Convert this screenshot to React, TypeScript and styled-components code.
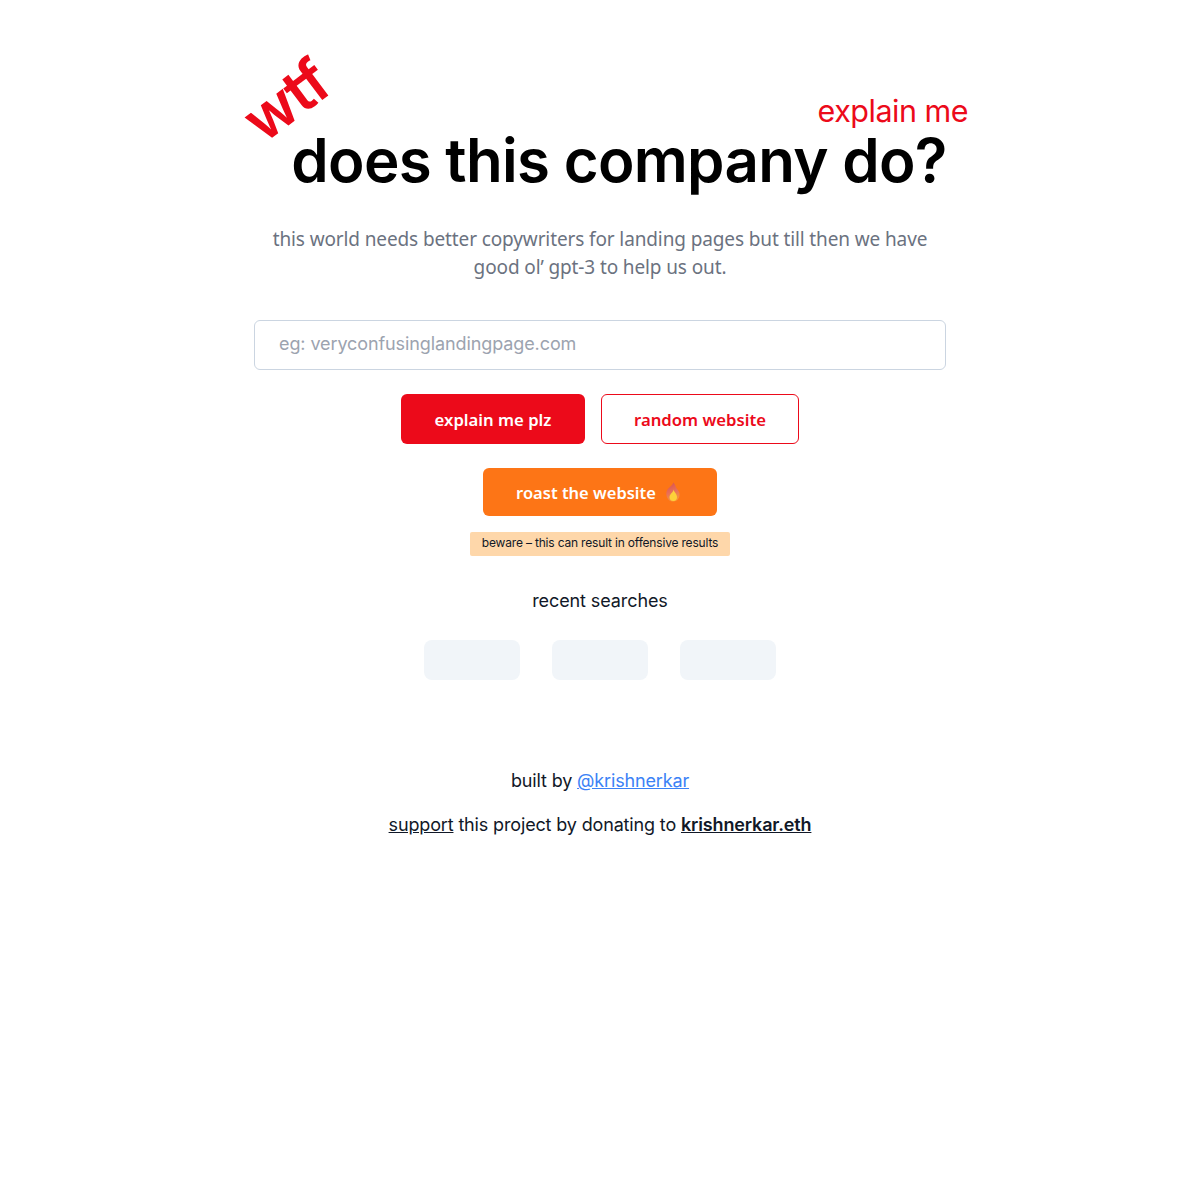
import React from 'react';
import styled, { createGlobalStyle } from 'styled-components';

const GlobalStyle = createGlobalStyle`
  html, body {
    margin: 0;
    padding: 0;
    background: #fff;
    font-family: Inter, "Liberation Sans", sans-serif;
  }
`;

const Page = styled.main`
  width: 692px;
  margin: 0 auto;
  padding-top: 126px;
  display: flex;
  flex-direction: column;
  align-items: center;
`;

const Headline = styled.div`
  position: relative;
  width: 692px;
  height: 70px;
  display: flex;
  justify-content: center;
`;

const Title = styled.h1`
  margin: 3px 0 0 38px;
  font-size: 60px;
  line-height: 62px;
  font-weight: 600;
  letter-spacing: -0.7px;
  color: #000;
  white-space: nowrap;
`;

const Wtf = styled.span`
  position: absolute;
  left: -13px;
  top: -61px;
  font-size: 60px;
  line-height: 70px;
  font-weight: 600;
  letter-spacing: -1.2px;
  color: #ec0a1a;
  transform: rotate(-37deg);
`;

const ExplainMe = styled.span`
  position: absolute;
  right: -22px;
  top: -32px;
  font-size: 30.5px;
  line-height: 34px;
  letter-spacing: -0.5px;
  color: #ec0a1a;
`;

const Subtitle = styled.p`
  width: 692px;
  margin: 29px 0 0;
  font-family: "Noto Sans", sans-serif;
  font-size: 19px;
  line-height: 28px;
  letter-spacing: -0.12px;
  text-align: center;
  color: #6b7280;
`;

const UrlInput = styled.input`
  box-sizing: border-box;
  width: 692px;
  height: 50px;
  margin-top: 39px;
  padding: 0 24px 3px;
  border: 1px solid #cbd5e1;
  border-radius: 6px;
  font-family: Inter, sans-serif;
  font-size: 18px;
  letter-spacing: -0.1px;
  outline: none;

  &::placeholder {
    color: #9ca3af;
    opacity: 1;
  }
`;

const ButtonRow = styled.div`
  display: flex;
  gap: 16px;
  margin-top: 24px;
`;

const Button = styled.button<{ $variant: 'solid' | 'outline' | 'roast' }>`
  box-sizing: border-box;
  height: ${({ $variant }) => ($variant === 'roast' ? '48px' : '50px')};
  width: ${({ $variant }) => ($variant === 'solid' ? '184px' : $variant === 'outline' ? '198px' : '234px')};
  padding: 0;
  display: flex;
  align-items: center;
  justify-content: center;
  gap: 9px;
  border-radius: 6px;
  border: ${({ $variant }) => ($variant === 'outline' ? '1px solid #ec0a1a' : 'none')};
  background: ${({ $variant }) =>
    $variant === 'solid' ? '#ec0a1a' : $variant === 'roast' ? '#fd7516' : '#fff'};
  color: ${({ $variant }) => ($variant === 'outline' ? '#ec0a1a' : '#fff')};
  font-family: "Noto Sans", sans-serif;
  font-size: ${({ $variant }) => ($variant === 'roast' ? '16.5px' : '16.7px')};
  font-weight: 600;
`;

const RoastWrap = styled.div`
  margin-top: 24px;
`;

const FlameIcon = styled.svg`
  margin-right: 3px;
`;

const Warning = styled.div`
  margin-top: 16px;
  box-sizing: border-box;
  height: 24px;
  padding: 0 12px 3px;
  display: flex;
  align-items: center;
  border-radius: 2px;
  background: #fed7aa;
  color: #111827;
  font-size: 12px;
  letter-spacing: -0.18px;
`;

const RecentTitle = styled.h2`
  margin: 32px 0 0;
  font-size: 18px;
  line-height: 26px;
  font-weight: 400;
  letter-spacing: -0.1px;
  color: #111827;
`;

const RecentRow = styled.div`
  display: flex;
  gap: 32px;
  margin-top: 26px;
`;

const Skeleton = styled.div`
  width: 96px;
  height: 40px;
  border-radius: 8px;
  background: #f1f5f9;
`;

const FooterLine = styled.p<{ $gap: number }>`
  margin: ${({ $gap }) => $gap}px 0 0;
  font-size: 18px;
  line-height: 26px;
  letter-spacing: -0.15px;
  color: #111827;
  white-space: nowrap;
`;

const Link = styled.a<{ $blue?: boolean; $bold?: boolean }>`
  color: ${({ $blue }) => ($blue ? '#3b82f6' : '#111827')};
  font-weight: ${({ $bold }) => ($bold ? 600 : 400)};
  text-decoration: underline;
`;

function Flame() {
  return (
    <FlameIcon width="16" height="20" viewBox="0 0 16 20" aria-hidden="true">
      <defs>
        <linearGradient id="flame" x1="0.3" y1="0" x2="0.6" y2="1">
          <stop offset="0" stopColor="#d9534f" />
          <stop offset="0.5" stopColor="#e9705a" />
          <stop offset="1" stopColor="#f99a34" />
        </linearGradient>
      </defs>
      <path
        d="M8 0.5C8.5 3 3.5 5 1.8 9C0.3 12.8 2.5 19.5 8 19.5C13 19.5 15 15 14.5 11.5C14 8 11 7 10.5 4C10.2 2.5 9 1 8 0.5Z"
        fill="url(#flame)"
      />
      <path
        d="M8.5 7.5C8.8 10 4.5 12 4.5 15.2C4.5 17.5 6 19 8.3 19C10.8 19 12.2 17.2 12 14.8C11.8 12 9.2 10.2 8.5 7.5Z"
        fill="#fdd13a"
      />
    </FlameIcon>
  );
}

export default function App() {
  return (
    <>
      <GlobalStyle />
      <Page>
        <Headline>
          <Wtf>wtf</Wtf>
          <ExplainMe>explain me</ExplainMe>
          <Title>does this company do?</Title>
        </Headline>
        <Subtitle>
          this world needs better copywriters for landing pages but till then we have good ol’ gpt-3 to help us out.
        </Subtitle>
        <UrlInput placeholder="eg: veryconfusinglandingpage.com" />
        <ButtonRow>
          <Button $variant="solid">explain me plz</Button>
          <Button $variant="outline">random website</Button>
        </ButtonRow>
        <RoastWrap>
          <Button $variant="roast">
            roast the website <Flame />
          </Button>
        </RoastWrap>
        <Warning>beware – this can result in offensive results</Warning>
        <RecentTitle>recent searches</RecentTitle>
        <RecentRow>
          <Skeleton />
          <Skeleton />
          <Skeleton />
        </RecentRow>
        <FooterLine $gap={88}>
          built by <Link $blue href="#">@krishnerkar</Link>
        </FooterLine>
        <FooterLine $gap={18}>
          <Link href="#">support</Link> this project by donating to <Link $bold href="#">krishnerkar.eth</Link>
        </FooterLine>
      </Page>
    </>
  );
}
